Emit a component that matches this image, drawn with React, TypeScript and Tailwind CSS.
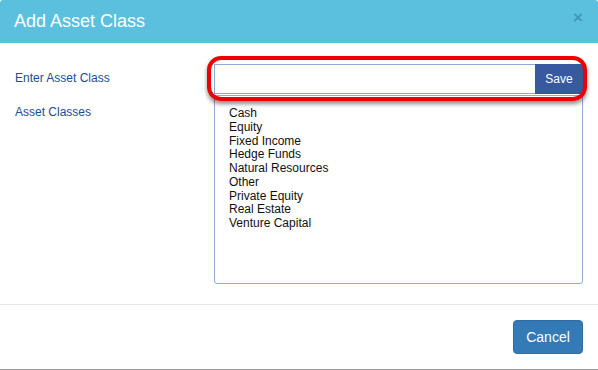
import React from 'react'

const assetClasses = [
  'Cash',
  'Equity',
  'Fixed Income',
  'Hedge Funds',
  'Natural Resources',
  'Other',
  'Private Equity',
  'Real Estate',
  'Venture Capital',
]

export default function App() {
  return (
    <div
      className="w-[598px] h-[370px] overflow-hidden bg-white flex flex-col"
      style={{ fontFamily: '"Liberation Sans", Arial, sans-serif' }}
    >
      {/* Modal */}
      <div className="h-[367px] flex flex-col bg-white">
        {/* Header */}
        <div className="h-[43px] bg-[#5bc0de] rounded-t-[3px] flex items-center justify-between pl-[14px] pr-[15px] shrink-0">
          <h3 className="text-white text-[18px] leading-none -mt-[2px]">Add Asset Class</h3>
          <span className="text-[#3f9ab6] text-[17px] font-bold leading-none -mt-[8px]">×</span>
        </div>

        {/* Body */}
        <div className="relative flex-1 pl-[15px] pr-[15px] pt-[21px]">
          <div className="flex items-start">
            <label className="w-[199px] text-[12px] leading-[28px] text-[#214c99]">Enter Asset Class</label>
            <div className="flex h-[30px] w-[369px]">
              <input className="flex-1 h-full border border-[#8eaadb] border-r-0 outline-none px-2 text-[12px]" />
              <button className="w-[48px] h-full bg-[#375a9f] text-white text-[12px] rounded-r-[3px]">Save</button>
            </div>
          </div>

          <div className="flex mt-[1px]">
            <label className="w-[199px] text-[12px] leading-none text-[#214c99] pt-[11px]">Asset Classes</label>
            <div className="w-[369px] h-[189px] border border-[#8eaadb] rounded-b-[3px] pt-[11px] pl-[14px]">
              {assetClasses.map((c) => (
                <div key={c} className="text-[12px] leading-[13.75px] text-[#111]">
                  {c}
                </div>
              ))}
            </div>
          </div>

          {/* Red highlight annotation */}
          <div className="absolute left-[207px] top-[13px] w-[380px] h-[45px] border-[4px] border-[#ee0000] rounded-[14px] shadow-[0_3px_4px_rgba(0,0,0,0.45)] pointer-events-none" />
        </div>

        {/* Footer */}
        <div className="h-[63px] border-t border-[#e5e5e5] flex items-start justify-end pr-[15px] pt-[15px] shrink-0">
          <button className="w-[70px] h-[34px] bg-[#337ab7] border border-[#2e6da4] rounded-[4px] text-white text-[14px]">
            Cancel
          </button>
        </div>
      </div>

      {/* Page behind the modal, mostly hidden */}
      <div className="h-[3px] border-b border-[#9a9a9a] bg-white" />
    </div>
  )
}
